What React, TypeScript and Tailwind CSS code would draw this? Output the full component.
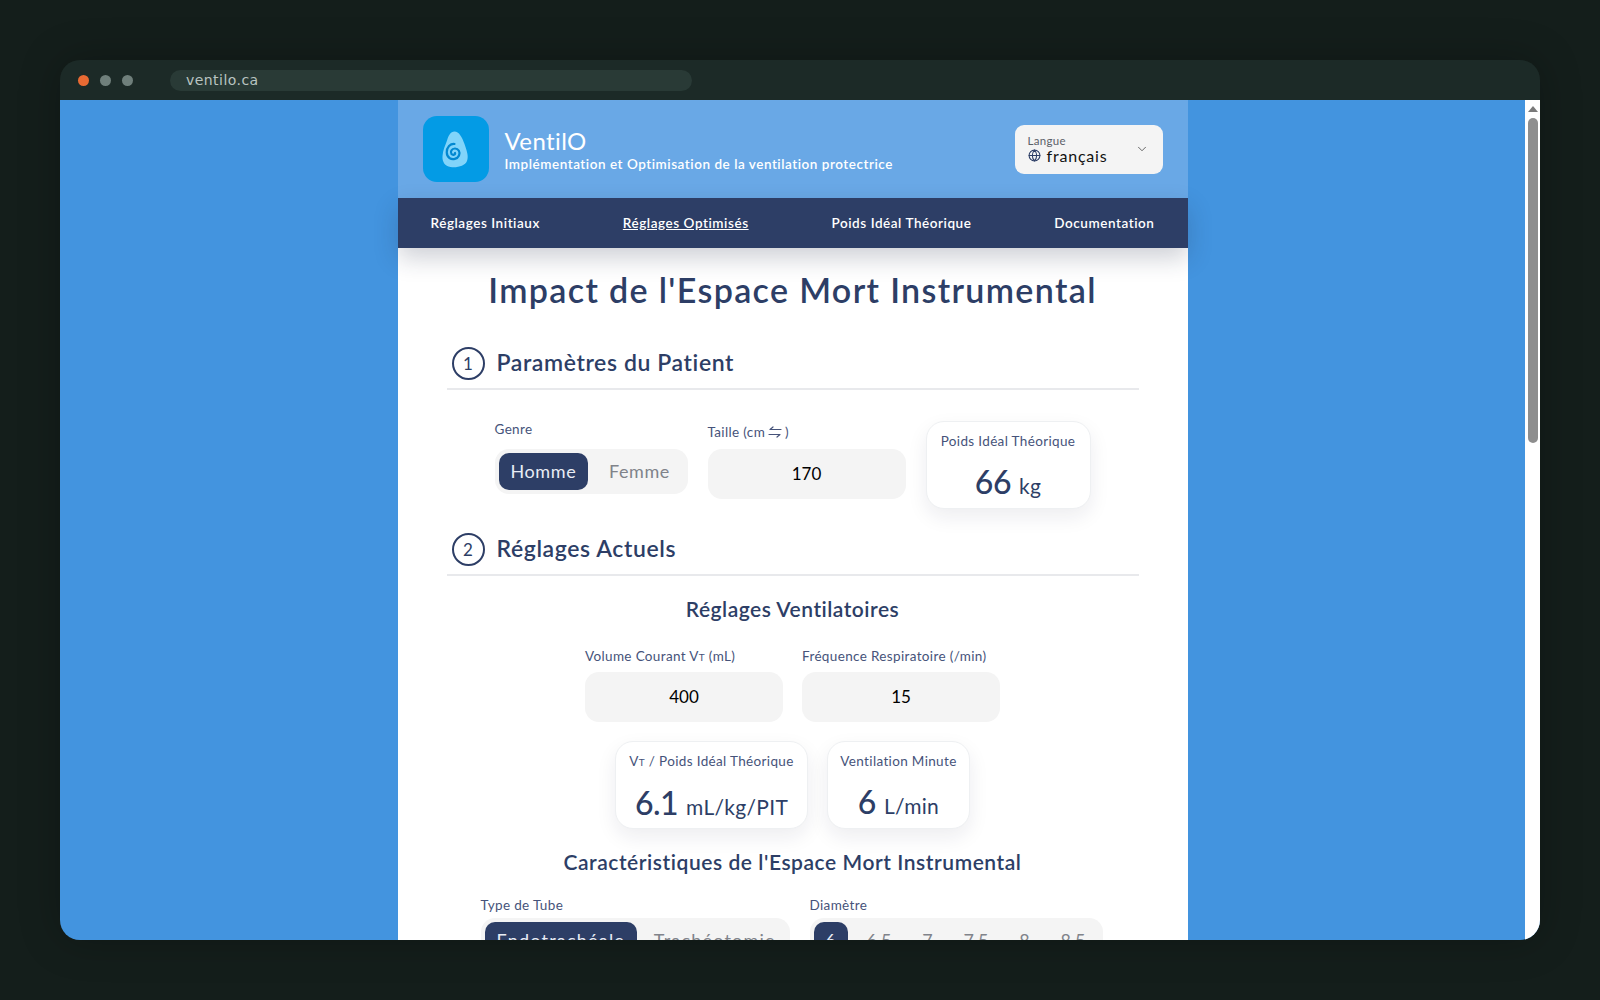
import * as React from "react";
import { ChevronDown, Globe } from "lucide-react";

const navItems = ["Réglages Initiaux", "Réglages Optimisés", "Poids Idéal Théorique", "Documentation"];
const diameters = ["6", "6.5", "7", "7.5", "8", "8.5"];

function Logo() {
  return (
    <div className="flex h-[66px] w-[66px] items-center justify-center rounded-[14px] bg-[#039be5]">
      <svg width="27" height="37" viewBox="0 0 27 37" fill="none">
        <path d="M12.500 0.500C17 0.500 20 6 22.500 13C24.500 19 27 25 25 30C23 35 15 37 8.500 36C3 35 0 31 0.500 25C1 19 3 15 5 9.500C6.500 4.500 8.500 0.500 12.500 0.500Z" fill="#81d4fa" />
        <path d="M13 22C13.500 23.500 11 24.500 9.500 23C8 21 9.500 17.500 13 17.500C16.500 17.500 18.500 21 17 24.500C15.500 28 10.500 29 7.500 27C4 24.500 3.800 18.500 7 15C8.500 13.500 10.500 12.800 12.500 13" stroke="#0288d1" strokeWidth="2.200" strokeLinecap="round" />
      </svg>
    </div>
  );
}

function SwapIcon() {
  return (
    <svg width="14" height="12" viewBox="0 0 14 12" fill="none" stroke="currentColor" strokeWidth="1.200" strokeLinecap="round" strokeLinejoin="round">
      <path d="M13 3.500H2L5 1" />
      <path d="M1 8.500H12L9 11" />
    </svg>
  );
}

function SectionTitle({ n, title }: { n: number; title: string }) {
  return (
    <div className="mx-[49px] flex h-[43px] items-start gap-3 border-b-2 border-[#e8e9ec] pl-[5px]">
      <span className="flex h-[33px] w-[33px] shrink-0 items-center justify-center rounded-full border-2 border-[#2d3e66] text-[17px]">
        {n}
      </span>
      <h2 className="mt-[1px] text-[23px] font-semibold leading-[28px] tracking-[0.6px]">{title}</h2>
    </div>
  );
}

function FieldLabel({ children, className = "" }: { children: React.ReactNode; className?: string }) {
  return <div className={`h-[18px] whitespace-nowrap text-[13.500px] leading-[18px] tracking-[0.35px] text-[#46537a] ${className}`}>{children}</div>;
}

function NumberField({ label, value, labelClass = "mb-[7px]" }: { label: React.ReactNode; value: string; labelClass?: string }) {
  return (
    <div className="w-[198px]">
      <FieldLabel className={labelClass}>{label}</FieldLabel>
      <div className="flex h-[50px] items-center justify-center rounded-[14px] bg-[#f4f4f4] text-[17px] text-black">{value}</div>
    </div>
  );
}

function Segmented({ options, tracking = "tracking-[0.6px]" }: { options: string[]; tracking?: string }) {
  return (
    <div className="flex h-[45px] items-center justify-between rounded-[14px] bg-[#f4f4f4] p-1">
      {options.map((o, i) => (
        <span
          key={o}
          className={`flex h-[37px] items-center justify-center rounded-[10px] text-[18px] ${tracking} ${
            i === 0 ? "flex-none bg-[#2d3e66] px-[12px] text-[#e8ecf5]" : "flex-auto pl-[7px] text-[#80838a]"
          }`}
        >
          {o}
        </span>
      ))}
    </div>
  );
}

function ResultCard({ label, value, unit, width }: { label: React.ReactNode; value: string; unit: string; width: string }) {
  return (
    <div className={`${width} h-[88px] shrink-0 rounded-[18px] border border-[#eef0f2] bg-white pt-[10px] text-center shadow-[0_8px_20px_rgba(20,30,60,0.08)]`}>
      <div className="whitespace-nowrap text-[13.500px] leading-[18px] tracking-[0.35px] text-[#46537a]">{label}</div>
      <div className="mt-[12px] flex items-baseline justify-center gap-[8px] leading-[40px]">
        <span className="text-[32px] font-medium tracking-[-0.5px]">{value}</span>
        <span className="text-[21px] tracking-[0.3px]">{unit}</span>
      </div>
    </div>
  );
}

const Sub = () => <span className="text-[10px]">T</span>;

export default function App() {
  return (
    <div className="h-[1000px] overflow-hidden bg-[#141e1b] p-[60px] font-['Lato',sans-serif]">
      <div className="flex h-[880px] flex-col overflow-hidden rounded-[20px] shadow-[0_0_40px_rgba(0,0,0,0.25)]">
        <div className="flex h-10 shrink-0 items-center bg-[#1c2a27] pl-[18px]">
          <span className="h-[11px] w-[11px] rounded-full bg-[#e86a33]" />
          <span className="ml-[11px] h-[11px] w-[11px] rounded-full bg-[#6f7f7b]" />
          <span className="ml-[11px] h-[11px] w-[11px] rounded-full bg-[#6f7f7b]" />
          <div className="ml-[37px] flex h-[21px] w-[522px] items-center rounded-full bg-[#293a36] px-4 pt-[1px] font-['DejaVu_Sans',sans-serif] text-[14px] tracking-[0.45px] text-[#b9c4c1]">
            ventilo.ca
          </div>
        </div>

        <div className="flex min-h-0 flex-1 bg-[#4394df]">
          <div className="flex min-w-0 flex-1 justify-center">
            <main className="h-[1200px] w-[790px] shrink-0 bg-white text-[#2d3e66]">
              <header className="flex h-[98px] items-center bg-[#69a8e6] px-[25px]">
                <Logo />
                <div className="ml-4 text-white">
                  <div className="text-[24px] leading-[29px] tracking-[0.4px]">VentilO</div>
                  <div className="text-[13.500px] font-semibold leading-[18px] tracking-[0.53px]">
                    Implémentation et Optimisation de la ventilation protectrice
                  </div>
                </div>
                <div className="ml-auto flex h-[49px] w-[148px] items-center rounded-[9px] bg-[#f4f4f4] pl-[13px] pr-[14px]">
                  <div className="flex-1">
                    <div className="text-[11.500px] leading-[13px] tracking-[0.3px] text-[#5b6068]">Langue</div>
                    <div className="flex items-center gap-[6px] text-[16px] leading-[18px] tracking-[0.8px] text-[#111]">
                      <Globe size={13} className="text-[#2d3e66]" />
                      français
                    </div>
                  </div>
                  <ChevronDown size={14} strokeWidth={1.25} className="text-[#333]" />
                </div>
              </header>

              <nav className="relative flex h-[50px] items-center justify-between bg-[#2d3e66] pl-[33px] pr-[33px] text-[13.500px] font-semibold tracking-[0.55px] text-white shadow-[0_10px_25px_rgba(30,40,70,0.22)]">
                {navItems.map((item, i) => (
                  <a key={item} className={i === 1 ? "underline" : ""}>
                    {item}
                  </a>
                ))}
              </nav>

              <h1 className="mt-[20px] text-center text-[34px] font-semibold leading-[44px] tracking-[1.35px]">
                Impact de l'Espace Mort Instrumental
              </h1>

              <div className="mt-[35px]">
                <SectionTitle n={1} title="Paramètres du Patient" />
              </div>

              <div className="mt-[31px] flex h-[88px] pl-[97px]">
                <div className="w-[193px]">
                  <FieldLabel className="mb-[11px] mt-[-1px]">Genre</FieldLabel>
                  <Segmented options={["Homme", "Femme"]} />
                </div>
                <div className="ml-5 pt-[2px]">
                  <NumberField
                    labelClass="mb-[8px]"
                    label={
                      <span className="flex items-center gap-[3px]">
                        Taille (cm <SwapIcon />)
                      </span>
                    }
                    value="170"
                  />
                </div>
                <div className="ml-5">
                  <ResultCard label="Poids Idéal Théorique" value="66" unit="kg" width="w-[165px]" />
                </div>
              </div>

              <div className="mt-[24px]">
                <SectionTitle n={2} title="Réglages Actuels" />
              </div>

              <h3 className="mt-[20px] text-center text-[21px] font-semibold leading-[26px] tracking-[0.5px]">Réglages Ventilatoires</h3>

              <div className="mt-[25px] flex justify-center gap-[19px]">
                <NumberField label={<>Volume Courant V<Sub /> (mL)</>} value="400" />
                <NumberField label="Fréquence Respiratoire (/min)" value="15" />
              </div>

              <div className="mt-[19px] flex justify-center gap-[19px]">
                <ResultCard label={<>V<Sub /> / Poids Idéal Théorique</>} value="6.1" unit="mL/kg/PIT" width="w-[193px]" />
                <ResultCard label="Ventilation Minute" value="6" unit="L/min" width="w-[143px]" />
              </div>

              <h3 className="mt-[20px] text-center text-[21px] font-semibold leading-[26px] tracking-[0.55px]">
                Caractéristiques de l'Espace Mort Instrumental
              </h3>

              <div className="mt-[21px] flex pl-[83px]">
                <div className="w-[309px]">
                  <FieldLabel className="mb-[4px]">Type de Tube</FieldLabel>
                  <Segmented options={["Endotrachéale", "Trachéotomie"]} tracking="tracking-[1.200px]" />
                </div>
                <div className="ml-5 w-[293px]">
                  <FieldLabel className="mb-[4px]">Diamètre</FieldLabel>
                  <div className="flex h-[45px] items-center gap-[14.500px] rounded-[14px] bg-[#f4f4f4] p-1">
                    {diameters.map((d, i) => (
                      <span
                        key={d}
                        className={`flex h-[37px] w-[34px] items-center justify-center rounded-[10px] text-[18px] ${
                          i === 0 ? "bg-[#2d3e66] text-[#e8ecf5]" : "text-[#80838a]"
                        }`}
                      >
                        {d}
                      </span>
                    ))}
                  </div>
                </div>
              </div>
            </main>
          </div>

          <div className="flex w-[15px] shrink-0 flex-col items-center bg-white">
            <span className="mt-[6px] h-0 w-0 border-x-[5px] border-b-[6px] border-x-transparent border-b-[#7a7a7a]" />
            <span className="mt-[6px] h-[325px] w-[10px] rounded-full bg-[#8e8e8e]" />
          </div>
        </div>
      </div>
    </div>
  );
}
